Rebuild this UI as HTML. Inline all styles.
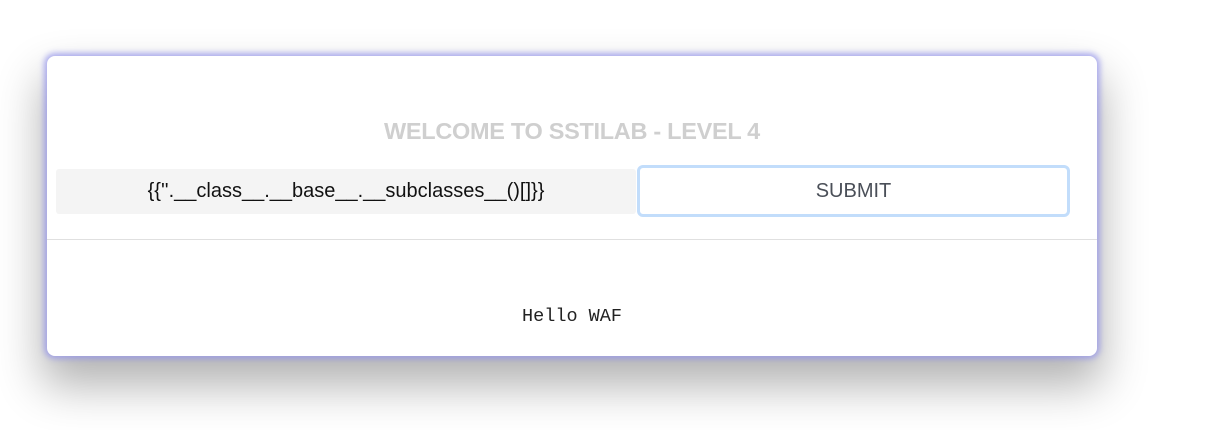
<!DOCTYPE html>
<html><head><style>
body{margin:0;width:1225px;height:430px;background:#fff;position:relative;overflow:hidden;font-family:"Liberation Sans",sans-serif}
.card{position:absolute;left:47px;top:56px;width:1050px;height:300px;background:#fff;border-radius:8px;
box-shadow:0 0 6px 3px rgba(150,150,235,.75),0 25px 45px 5px rgba(0,0,0,.3)}
.title{position:absolute;left:0;width:100%;top:62px;text-align:center;font-weight:bold;font-size:23.5px;color:#cfcfcf;letter-spacing:-0.3px}
.inp{position:absolute;left:9px;top:113px;width:580px;height:45px;background:#f4f4f4;border-radius:3px;text-align:center;line-height:45px;font-size:20px;color:#111}
.btn{position:absolute;left:590px;top:109px;width:427px;height:46px;border:3px solid #c2ddfb;border-radius:6px;text-align:center;line-height:46px;font-size:20px;color:#4a4f58}
.hr{position:absolute;left:0;right:0;top:183px;height:1px;background:#e0e0e0}
.out{position:absolute;left:0;width:100%;top:250px;text-align:center;font-family:"Liberation Mono",monospace;font-size:18.5px;color:#222}
</style></head><body>
<div class="card">
<div class="title">WELCOME TO SSTILAB - LEVEL 4</div>
<div class="inp">{{''.__class__.__base__.__subclasses__()[]}}</div>
<div class="btn">SUBMIT</div>
<div class="hr"></div>
<div class="out">Hello WAF</div>
</div>
</body></html>
